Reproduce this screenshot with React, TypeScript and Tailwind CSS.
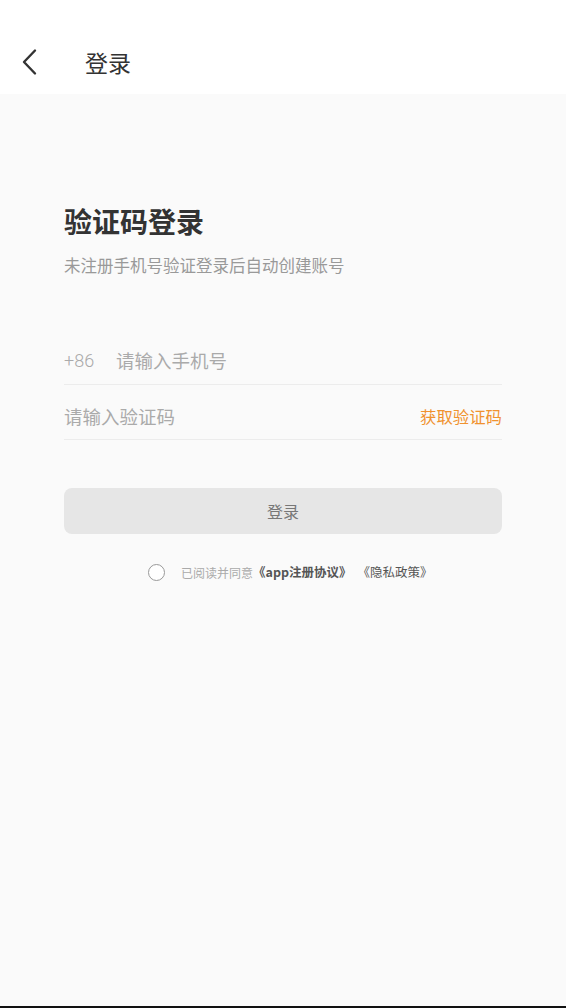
import React from 'react';

const FONT = { fontFamily: '"Noto Sans CJK SC", "Noto Sans", Roboto, sans-serif' };

export default function App() {
  return (
    <div className="w-[566px] h-[1008px] bg-[#fafafa] flex flex-col" style={FONT}>
      {/* 顶部导航 */}
      <div className="h-[94px] shrink-0 bg-white flex items-center pt-[30px]">
        <div className="w-[85px] pl-[20px] flex items-center">
          <svg width="20" height="28" viewBox="0 0 20 28" fill="none">
            <path d="M15 2.5 L4 14 L15 25.5" stroke="#333" strokeWidth="2.4" strokeLinecap="round" strokeLinejoin="round" />
          </svg>
        </div>
        <span className="text-[23px] text-[#333] leading-none">登录</span>
      </div>

      <div className="flex-1 px-[64px] pt-[107px] flex flex-col">
        <h1 className="text-[28px] font-bold text-[#333] leading-[40px]">验证码登录</h1>
        <p className="mt-[13px] text-[16.5px] text-[#999] leading-[22px]">未注册手机号验证登录后自动创建账号</p>

        <div className="mt-[61px] h-[48px] flex items-center border-b border-[#ececec]">
          <span className="text-[18px] text-[#aaa] w-[52px] leading-none font-light" style={{ fontFamily: 'Roboto, "Noto Sans", sans-serif' }}>+86</span>
          <span className="text-[18.5px] text-[#aaa] leading-none">请输入手机号</span>
        </div>
        <div className="h-[55px] flex items-center justify-between border-b border-[#ececec] pt-[8px]">
          <span className="text-[18.5px] text-[#aaa] leading-none">请输入验证码</span>
          <span className="text-[16.4px] text-[#f0922f] leading-none">获取验证码</span>
        </div>

        <button className="mt-[48px] h-[46px] w-full rounded-[8px] bg-[#e6e6e6] text-[16px] text-[#777] flex items-center justify-center">
          登录
        </button>

        <div className="mt-[30px] flex items-center pl-[84px]">
          <span className="w-[17px] h-[17px] rounded-full border border-[#999] bg-white mr-[16px]" />
          <span className="text-[12px] text-[#aaa] leading-none">已阅读并同意</span>
          <span className="text-[12.5px] text-[#555] font-bold leading-none">《app注册协议》</span>
          <span className="text-[12.5px] text-[#555] leading-none ml-[6px]">《隐私政策》</span>
        </div>
      </div>

      <div className="h-[2px] bg-[#111] shrink-0" />
    </div>
  );
}
